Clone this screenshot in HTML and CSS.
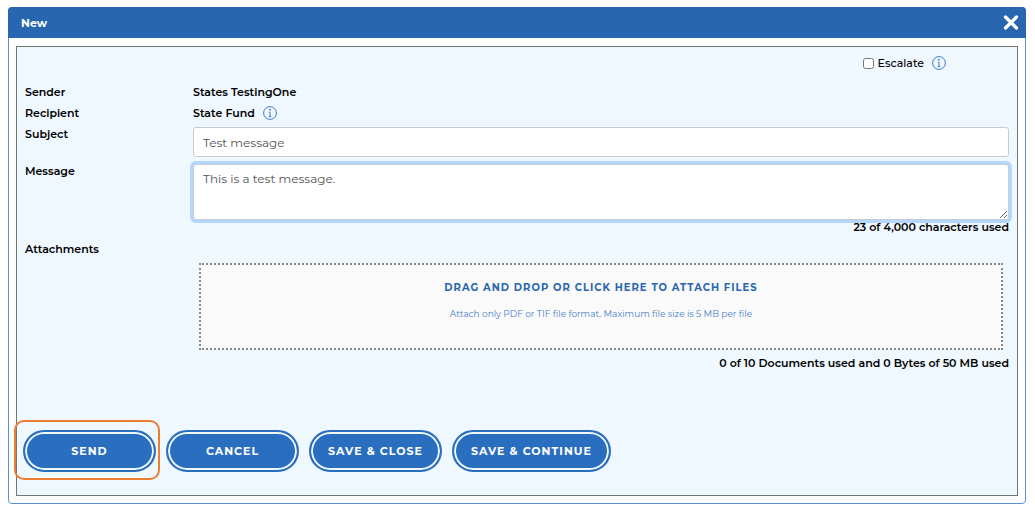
FILE: index.html
```html
<!DOCTYPE html>
<html lang="en">
<head>
  <meta charset="UTF-8" />
  <meta name="viewport" content="width=device-width, initial-scale=1" />
  <title>New</title>
  <link rel="stylesheet" href="styles.css">
</head>
<body>

  <div class="dialog">
    <div class="dialog-header">
      <h1>New</h1>
      <button type="button" class="close-button" aria-label="Close">
        <svg width="16" height="16" viewBox="0 0 16 16"><path d="M2.5 2L13.5 13M13.5 2L2.5 13" stroke="#fff" stroke-width="3.2" stroke-linecap="round"/></svg>
      </button>
    </div>

    <form class="panel">
      <div class="escalate">
        <input type="checkbox" id="escalate" />
        <label for="escalate">Escalate</label>
        <svg class="info" width="14" height="14" viewBox="0 0 14 14"><circle cx="7" cy="7" r="6.4" fill="none" stroke="#2a6ebf" stroke-width="0.9"/><circle cx="7" cy="3.8" r="0.9" fill="#2a6ebf"/><path d="M5.9 6.2H7V10.5M5.8 10.6H8.2" fill="none" stroke="#2a6ebf" stroke-width="0.9"/></svg>
      </div>

      <div class="row">
        <span class="label">Sender</span>
        <span class="value">States TestingOne</span>
      </div>
      <div class="row">
        <span class="label">Recipient</span>
        <span class="value">State Fund
          <svg class="info" width="14" height="14" viewBox="0 0 14 14"><circle cx="7" cy="7" r="6.4" fill="none" stroke="#2a6ebf" stroke-width="0.9"/><circle cx="7" cy="3.8" r="0.9" fill="#2a6ebf"/><path d="M5.9 6.2H7V10.5M5.8 10.6H8.2" fill="none" stroke="#2a6ebf" stroke-width="0.9"/></svg>
        </span>
      </div>
      <div class="row row-field">
        <label class="label" for="subject">Subject</label>
        <input type="text" id="subject" class="field" value="Test message" />
      </div>
      <div class="row row-field">
        <label class="label" for="message">Message</label>
        <div>
          <textarea id="message" class="field message">This is a test message.</textarea>
          <div class="counter">23 of 4,000 characters used</div>
        </div>
      </div>
      <div class="row">
        <span class="label">Attachments</span>
        <div>
          <button type="button" class="dropzone">
            <span class="drop-title">Drag and drop or click here to attach files</span>
            <span class="drop-hint">Attach only PDF or TIF file format. Maximum file size is 5 MB per file</span>
          </button>
          <div class="counter">0 of 10 Documents used and 0 Bytes of 50 MB used</div>
        </div>
      </div>

      <div class="actions">
        <div class="highlighted"><button type="button" class="btn">Send</button></div>
        <button type="button" class="btn">Cancel</button>
        <button type="button" class="btn">Save &amp; Close</button>
        <button type="button" class="btn">Save &amp; Continue</button>
      </div>
    </form>
  </div>

</body>
</html>
```

FILE: styles.css
```css
* { box-sizing: border-box; }
body {
  margin: 7px 9px 7px 8px;
  background: #fff;
  color: #000;
  font-family: Montserrat, Inter, sans-serif;
  font-size: 11px;
  font-weight: 600;
  line-height: 20px;
}
button, input, textarea { font-family: inherit; }
.dialog {
  border: 1px solid #5b90d0;
  border-radius: 4px;
}
.dialog-header {
  display: flex;
  justify-content: space-between;
  align-items: center;
  height: 31px;
  margin: -1px -1px 0;
  padding: 0 7px 0 13px;
  border-radius: 4px 4px 0 0;
  background: #2866af;
}
.dialog-header h1 {
  margin: 0;
  color: #fff;
  font-size: 11px;
  font-weight: 700;
}
.close-button {
  display: flex;
  padding: 0;
  border: none;
  background: none;
  cursor: pointer;
}
.panel {
  margin: 8px 7px 7px;
  padding: 0 8px 23px;
  border: 1px solid #6f7777;
  background: #eff7ff;
}
.escalate {
  display: flex;
  align-items: center;
  justify-content: flex-end;
  height: 32px;
  margin-bottom: 3px;
  padding-right: 63px;
  font-weight: 500;
}
.escalate input {
  width: 11px;
  height: 11px;
  margin: 0 4px 0 0;
}
.info { margin-left: 8px; }
.row {
  display: grid;
  grid-template-columns: 168px 1fr;
  min-height: 21px;
}
.value {
  display: flex;
  align-items: center;
  height: 20px;
}
.row-field { margin-bottom: 4px; }
.row-field .field { margin-top: 3px; }
.field {
  display: block;
  width: 100%;
  height: 30px;
  padding: 4px 9px;
  border: 1px solid #c8ccd1;
  border-radius: 3px;
  background: #fff;
  color: #555;
  font-size: 12px;
  font-weight: 400;
  line-height: 20px;
}
.message {
  height: 56px;
  resize: both;
  box-shadow: 0 0 0 3px #b3d7ff;
}
.counter {
  height: 15px;
  line-height: 15px;
  text-align: right;
}
.dropzone {
  display: flex;
  flex-direction: column;
  align-items: center;
  width: calc(100% - 12px);
  height: 87px;
  margin: 24px 6px 6px;
  padding: 13px 8px;
  gap: 6px;
  border: 2px dotted #888;
  background: #fafafa;
  line-height: 20px;
  cursor: pointer;
}
.drop-title {
  color: #2866af;
  font-size: 10px;
  font-weight: 700;
  letter-spacing: 1px;
  text-transform: uppercase;
}
.drop-hint {
  color: #4a7fc6;
  font-size: 9px;
  font-weight: 400;
}
.actions {
  display: flex;
  gap: 10px;
  margin: 59px 0 0 -2px;
}
.btn {
  min-width: 133px;
  height: 42px;
  padding: 0 17px;
  border: 2px solid #2a6ebf;
  border-radius: 21px;
  background: #2a6ebf;
  box-shadow: inset 0 0 0 2px #eff7ff;
  color: #fff;
  font-size: 11px;
  font-weight: 700;
  letter-spacing: 1px;
  text-transform: uppercase;
  cursor: pointer;
}
.highlighted { position: relative; }
.highlighted::after {
  content: "";
  position: absolute;
  inset: -10px -4px -8px -9px;
  border: 2px solid #ed7d31;
  border-radius: 10px;
  pointer-events: none;
}
```
